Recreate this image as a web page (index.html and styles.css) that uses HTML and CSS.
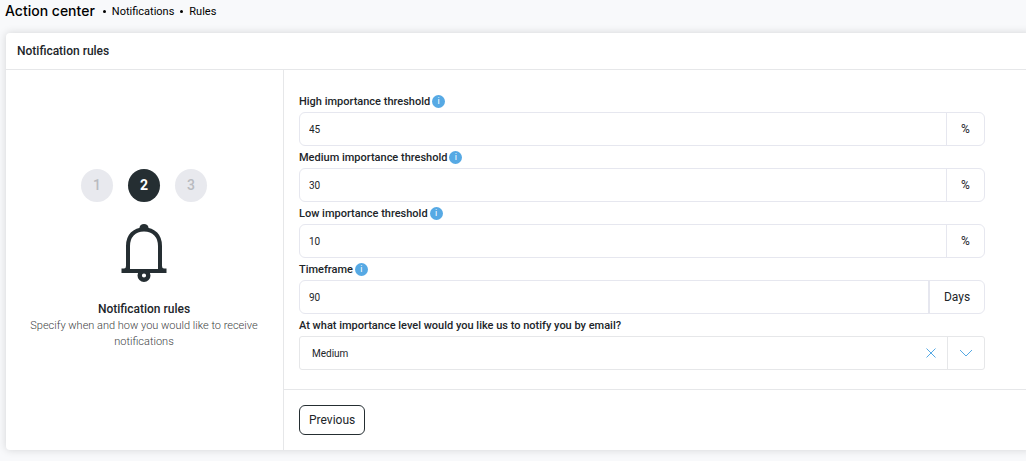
FILE: index.html
```
<!DOCTYPE html>
<html lang="en">
<head>
<meta charset="utf-8">
<meta name="viewport" content="width=device-width, initial-scale=1">
<title>Notification rules</title>
<link rel="stylesheet" href="styles.css">
</head>
<body>
<nav class="crumbs" aria-label="Breadcrumb">
  <h1 class="crumbs-title">Action center</h1>
  <span class="dot"></span>
  <a class="crumb" href="#notifications">Notifications</a>
  <span class="dot"></span>
  <a class="crumb" href="#rules">Rules</a>
</nav>
<main class="card">
  <h2 class="card-header">Notification rules</h2>
  <div class="card-body">
    <aside class="intro">
      <ol class="steps">
        <li class="step">1</li>
        <li class="step step-active" aria-current="step">2</li>
        <li class="step">3</li>
      </ol>
      <svg class="bell" viewBox="0 0 46 60" aria-hidden="true">
        <path d="M7 47V23C7 13 13 6.500 23 6.500S39 13 39 23V47" fill="none" stroke="#252e32" stroke-width="4"/>
        <path d="M18.500 7V5C18.500 2.500 20.500 1 23 1S27.500 2.500 27.500 5V7Z" fill="#252e32"/>
        <path d="M.5 45.500H3Q5 45.500 5 43H9V46H37V43H41Q41 45.500 43 45.500H45.500V50H.5Z" fill="#252e32"/>
        <circle cx="23" cy="52.500" r="4.300" fill="#fff" stroke="#252e32" stroke-width="4.400"/>
      </svg>
      <h3 class="intro-title">Notification rules</h3>
      <p class="intro-text">Specify when and how you would like to receive notifications</p>
    </aside>
    <form class="form">
      <div class="fields">
        <div class="field">
          <div class="label-row"><label for="high">High importance threshold</label><span class="info">i</span></div>
          <div class="group"><input class="input" id="high" type="text" value="45"><span class="unit">%</span></div>
        </div>
        <div class="field">
          <div class="label-row"><label for="medium">Medium importance threshold</label><span class="info">i</span></div>
          <div class="group"><input class="input" id="medium" type="text" value="30"><span class="unit">%</span></div>
        </div>
        <div class="field">
          <div class="label-row"><label for="low">Low importance threshold</label><span class="info">i</span></div>
          <div class="group"><input class="input" id="low" type="text" value="10"><span class="unit">%</span></div>
        </div>
        <div class="field">
          <div class="label-row"><label for="timeframe">Timeframe</label><span class="info">i</span></div>
          <div class="group"><input class="input" id="timeframe" type="text" value="90"><span class="unit unit-days">Days</span></div>
        </div>
        <div class="field">
          <div class="label-row"><label for="level">At what importance level would you like us to notify you by email?</label></div>
          <div class="group group-select">
            <select class="select" id="level"><option>High</option><option selected>Medium</option><option>Low</option></select>
            <button class="clear" type="button" aria-label="Clear"><svg width="10" height="10" viewBox="0 0 10 10"><path d="M.5 .5L9.500 9.500M9.500 .5L.5 9.500"/></svg></button>
            <button class="toggle" type="button" aria-label="Open"><svg width="14" height="8" viewBox="0 0 14 8"><path d="M1 1L7 7L13 1"/></svg></button>
          </div>
        </div>
      </div>
      <div class="actions"><button class="previous" type="button">Previous</button></div>
    </form>
  </div>
</main>
</body>
</html>
```
FILE: styles.css
```
* { box-sizing: border-box; }
body {
  margin: 0;
  background: #f8f9fb;
  color: #212529;
  font-family: Roboto, sans-serif;
  font-size: 11px;
  overflow-x: hidden;
}
h1, h2, h3, p, ol { margin: 0; padding: 0; }
button, input, select { font: inherit; color: inherit; }
.crumbs {
  display: flex;
  align-items: center;
  height: 23px;
  margin-bottom: 10px;
  padding-left: 5px;
  color: #000;
}
.crumbs-title {
  font: 500 14px/20px Inter, sans-serif;
  padding: 0 2px 2px 0;
}
.crumb { color: inherit; text-decoration: none; }
.dot {
  width: 3px;
  height: 3px;
  margin: 0 6px;
  border-radius: 50%;
  background: #000;
}
.card {
  margin: 0 -6px 11px 6px;
  background: #fff;
  border-radius: 4px;
  box-shadow: 0 0 8px rgba(0, 0, 0, 0.15);
}
.card-header {
  padding: 8px 11px;
  border-bottom: 1px solid #e6e7e9;
  font-size: 12px;
  font-weight: 500;
  line-height: 20px;
}
.card-body { display: flex; }
.intro {
  display: flex;
  flex-direction: column;
  align-items: center;
  width: 278px;
  padding: 99px 17px 99px 16px;
  border-right: 1px solid #e6e7e9;
  text-align: center;
}
.steps { display: flex; gap: 15px; list-style: none; }
.step {
  width: 32px;
  border-radius: 50%;
  background: #e8e9ee;
  color: #b9bbc0;
  font-size: 14px;
  font-weight: 500;
  line-height: 33px;
}
.step-active { background: #252e32; color: #fff; font-weight: 700; }
.bell { width: 46px; height: 60px; margin: 21px 0 17px; }
.intro-title { font-size: 12px; font-weight: 500; line-height: 18px; }
.intro-text { color: #404244; font-weight: 300; line-height: 16px; }
.form { flex: 1; min-width: 0; }
.fields {
  padding: 20px 41px 19px 15px;
  margin-right: 6px;
  border-bottom: 1px solid #e6e7e9;
}
.label-row {
  display: flex;
  align-items: center;
  gap: 2px;
  height: 22px;
  font-weight: 500;
}
.info {
  width: 13px;
  height: 13px;
  border-radius: 50%;
  background: #56a9e4;
  color: #fff;
  font-size: 9px;
  font-weight: 400;
  line-height: 13px;
  text-align: center;
}
.group {
  display: flex;
  height: 34px;
  border: 1px solid #e6e7ef;
  border-radius: 6px;
  overflow: hidden;
}
.group-select { border-color: #e6e7e9; border-radius: 3px; }
.input, .select {
  flex: 1;
  min-width: 0;
  padding: 0 9px;
  border: 0;
  background: transparent;
  font-size: 10px;
}
.select { appearance: none; padding: 0 12px; }
.unit {
  display: flex;
  align-items: center;
  justify-content: center;
  width: 38px;
  border-left: 1px solid #e6e7ef;
  font-size: 12px;
}
.unit-days { width: 56px; border-left-width: 2px; }
.clear, .toggle {
  display: flex;
  align-items: center;
  justify-content: center;
  width: 32px;
  padding: 0;
  border: 0;
  background: transparent;
}
.toggle { width: 37px; border-left: 1px solid #e6e7e9; }
.clear path, .toggle path { fill: none; stroke: #56a9e4; stroke-width: 1; }
.actions { padding: 15px; }
.previous {
  height: 30px;
  padding: 0 9px;
  border: 1px solid #252e32;
  border-radius: 6px;
  background: #fff;
  font-size: 12px;
}
```
